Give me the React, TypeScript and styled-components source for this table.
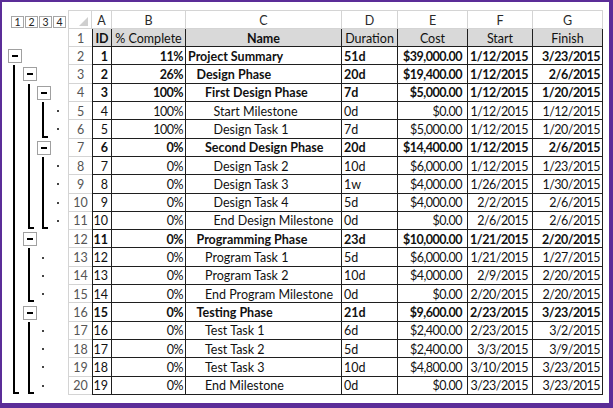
import React from 'react';
import styled, { createGlobalStyle } from 'styled-components';

const GlobalStyle = createGlobalStyle`
  html, body { margin: 0; padding: 0; background: #fff; }
  body { font-family: Lato, "Liberation Sans", sans-serif; }
  * { box-sizing: border-box; }
`;

const COLS = '66px 24px 20px 74px 156px 56px 70px 65px 70px';
const GRID = '#d4d4d4';
const INK = '#1f1f1f';

const Frame = styled.div`
  width: 613px;
  height: 408px;
  border-style: solid;
  border-color: #5b2d98;
  border-width: 2px 4px 5px 2px;
  padding-top: 8px;
  background: #fff;
  overflow: hidden;
`;

const Sheet = styled.div`
  display: flex;
  flex-direction: column;
`;

const Row = styled.div<{ $h: number }>`
  display: grid;
  grid-template-columns: ${COLS};
  height: ${(p) => p.$h}px;
`;

const LevelBar = styled.div`
  display: flex;
  align-items: flex-end;
  padding: 0 0 1px 9px;
  gap: 1px;
`;

const LevelButton = styled.div`
  width: 13px;
  height: 12px;
  border: 1px solid #a6a6a6;
  font-size: 10.5px;
  line-height: 10px;
  color: #222;
  display: flex;
  align-items: center;
  justify-content: center;
  background: #fff;
`;

const Corner = styled.div`
  border: 1px solid ${GRID};
  position: relative;
  &::after {
    content: '';
    position: absolute;
    right: 3px;
    bottom: 2px;
    border-style: solid;
    border-width: 0 0 9px 9px;
    border-color: transparent transparent #cfcfcf transparent;
  }
`;

const ColLetter = styled.div`
  border-top: 1px solid ${GRID};
  border-bottom: 1px solid ${GRID};
  border-right: 1px solid ${GRID};
  display: flex;
  align-items: center;
  justify-content: center;
  font-size: 12.5px;
  color: #2a2a2a;
  padding-top: 1px;
`;

const Gutter = styled.div`
  display: flex;
  padding-left: 6px;
`;

const Slot = styled.div`
  width: 14.6px;
  height: 100%;
  display: flex;
  flex-shrink: 0;
`;

const MinusBox = styled.div`
  width: 14px;
  height: 14px;
  align-self: center;
  border: 1px solid #a0a0a0;
  background: #fff;
  display: flex;
  align-items: center;
  justify-content: center;
  &::after {
    content: '';
    width: 6px;
    height: 2px;
    background: #000;
  }
`;

const VLine = styled.div`
  margin-left: 5px;
  width: 2px;
  height: 100%;
  background: #000;
`;

const LineEnd = styled.div`
  margin-left: 5px;
  width: 6px;
  height: calc(100% - 1px);
  border-left: 2px solid #000;
  border-bottom: 2px solid #000;
`;

const Dot = styled.div`
  margin-left: 5px;
  width: 2px;
  height: 2px;
  align-self: center;
  background: #444;
`;

const RowNum = styled.div`
  border-left: 1px solid ${GRID};
  border-bottom: 1px solid ${GRID};
  display: flex;
  align-items: center;
  justify-content: center;
  font-size: 12.5px;
  color: #555;
  padding-top: 1px;
`;

type Align = 'left' | 'right' | 'center';

const Cell = styled.div<{
  $align: Align;
  $bold?: boolean;
  $indent?: number;
  $head?: boolean;
  $first?: boolean;
  $num?: boolean;
  $padR?: number;
}>`
  border-right: 1px solid ${INK};
  border-bottom: 1px solid ${INK};
  border-left: ${(p) => (p.$first ? `1px solid ${INK}` : 'none')};
  background: ${(p) => (p.$head ? '#d9d9d9' : '#fff')};
  display: flex;
  align-items: center;
  justify-content: ${(p) => (p.$align === 'left' ? 'flex-start' : p.$align === 'right' ? 'flex-end' : 'center')};
  padding: 1px ${(p) => p.$padR ?? 2}px 0 ${(p) => 2 + (p.$indent ?? 0) * 8.5}px;
  font-size: 12.5px;
  letter-spacing: ${(p) => (p.$num ? '-0.5px' : '0')};
  font-weight: ${(p) => (p.$bold ? 700 : 400)};
  color: #111;
  white-space: nowrap;
  overflow: hidden;
`;

type Task = {
  id: number;
  pct: string;
  name: string;
  lvl: number;
  dur: string;
  cost: string;
  start: string;
  finish: string;
  bold?: boolean;
  gutter: string;
};

const tasks: Task[] = [
  { id: 1, pct: '11%', name: 'Project Summary', lvl: 0, dur: '51d', cost: '$39,000.00', start: '1/12/2015', finish: '3/23/2015', bold: true, gutter: 'B' },
  { id: 2, pct: '26%', name: 'Design Phase', lvl: 1, dur: '20d', cost: '$19,400.00', start: '1/12/2015', finish: '2/6/2015', bold: true, gutter: 'LB' },
  { id: 3, pct: '100%', name: 'First Design Phase', lvl: 2, dur: '7d', cost: '$5,000.00', start: '1/12/2015', finish: '1/20/2015', bold: true, gutter: 'LLB' },
  { id: 4, pct: '100%', name: 'Start Milestone', lvl: 3, dur: '0d', cost: '$0.00', start: '1/12/2015', finish: '1/12/2015', gutter: 'LLLD' },
  { id: 5, pct: '100%', name: 'Design Task 1', lvl: 3, dur: '7d', cost: '$5,000.00', start: '1/12/2015', finish: '1/20/2015', gutter: 'LLED' },
  { id: 6, pct: '0%', name: 'Second Design Phase', lvl: 2, dur: '20d', cost: '$14,400.00', start: '1/12/2015', finish: '2/6/2015', bold: true, gutter: 'LLB' },
  { id: 7, pct: '0%', name: 'Design Task 2', lvl: 3, dur: '10d', cost: '$6,000.00', start: '1/12/2015', finish: '1/23/2015', gutter: 'LLLD' },
  { id: 8, pct: '0%', name: 'Design Task 3', lvl: 3, dur: '1w', cost: '$4,000.00', start: '1/26/2015', finish: '1/30/2015', gutter: 'LLLD' },
  { id: 9, pct: '0%', name: 'Design Task 4', lvl: 3, dur: '5d', cost: '$4,000.00', start: '2/2/2015', finish: '2/6/2015', gutter: 'LLLD' },
  { id: 10, pct: '0%', name: 'End Design Milestone', lvl: 3, dur: '0d', cost: '$0.00', start: '2/6/2015', finish: '2/6/2015', gutter: 'LEED' },
  { id: 11, pct: '0%', name: 'Programming Phase', lvl: 1, dur: '23d', cost: '$10,000.00', start: '1/21/2015', finish: '2/20/2015', bold: true, gutter: 'LB' },
  { id: 12, pct: '0%', name: 'Program Task 1', lvl: 2, dur: '5d', cost: '$6,000.00', start: '1/21/2015', finish: '1/27/2015', gutter: 'LLD' },
  { id: 13, pct: '0%', name: 'Program Task 2', lvl: 2, dur: '10d', cost: '$4,000.00', start: '2/9/2015', finish: '2/20/2015', gutter: 'LLD' },
  { id: 14, pct: '0%', name: 'End Program Milestone', lvl: 2, dur: '0d', cost: '$0.00', start: '2/20/2015', finish: '2/20/2015', gutter: 'LED' },
  { id: 15, pct: '0%', name: 'Testing Phase', lvl: 1, dur: '21d', cost: '$9,600.00', start: '2/23/2015', finish: '3/23/2015', bold: true, gutter: 'LB' },
  { id: 16, pct: '0%', name: 'Test Task 1', lvl: 2, dur: '6d', cost: '$2,400.00', start: '2/23/2015', finish: '3/2/2015', gutter: 'LLD' },
  { id: 17, pct: '0%', name: 'Test Task 2', lvl: 2, dur: '5d', cost: '$2,400.00', start: '3/3/2015', finish: '3/9/2015', gutter: 'LLD' },
  { id: 18, pct: '0%', name: 'Test Task 3', lvl: 2, dur: '10d', cost: '$4,800.00', start: '3/10/2015', finish: '3/23/2015', gutter: 'LLD' },
  { id: 19, pct: '0%', name: 'End Milestone', lvl: 2, dur: '0d', cost: '$0.00', start: '3/23/2015', finish: '3/23/2015', gutter: 'EED' },
];

const SlotContent: React.FC<{ k: string }> = ({ k }) => {
  if (k === 'B') return <MinusBox />;
  if (k === 'L') return <VLine />;
  if (k === 'E') return <LineEnd />;
  if (k === 'D') return <Dot />;
  return null;
};

const OutlineGutter: React.FC<{ code: string }> = ({ code }) => (
  <Gutter>
    {code.split('').map((k, i) => (
      <Slot key={i}>
        <SlotContent k={k} />
      </Slot>
    ))}
  </Gutter>
);

const ROW_H = 18.32;

export default function App() {
  return (
    <>
      <GlobalStyle />
      <Frame>
        <Sheet>
          <Row $h={19}>
            <LevelBar>
              {[1, 2, 3, 4].map((n) => (
                <LevelButton key={n}>{n}</LevelButton>
              ))}
            </LevelBar>
            <Corner />
            {['A', 'B', 'C', 'D', 'E', 'F', 'G'].map((c) => (
              <ColLetter key={c}>{c}</ColLetter>
            ))}
          </Row>
          <Row $h={18}>
            <Gutter />
            <RowNum>1</RowNum>
            <Cell $align="center" $head $first $bold>ID</Cell>
            <Cell $align="center" $head>% Complete</Cell>
            <Cell $align="center" $head $bold>Name</Cell>
            <Cell $align="center" $head>Duration</Cell>
            <Cell $align="center" $head>Cost</Cell>
            <Cell $align="center" $head>Start</Cell>
            <Cell $align="center" $head>Finish</Cell>
          </Row>
          {tasks.map((t, i) => (
            <Row $h={ROW_H} key={t.id}>
              <OutlineGutter code={t.gutter} />
              <RowNum>{i + 2}</RowNum>
              <Cell $align="right" $first $bold={t.bold} $padR={3}>{t.id}</Cell>
              <Cell $align="right" $bold={t.bold} $num>{t.pct}</Cell>
              <Cell $align="left" $bold={t.bold} $indent={t.lvl}>{t.name}</Cell>
              <Cell $align="left" $bold={t.bold}>{t.dur}</Cell>
              <Cell $align="right" $bold={t.bold} $num $padR={5}>{t.cost}</Cell>
              <Cell $align="right" $bold={t.bold} $num $padR={4}>{t.start}</Cell>
              <Cell $align="right" $bold={t.bold} $num $padR={2}>{t.finish}</Cell>
            </Row>
          ))}
        </Sheet>
      </Frame>
    </>
  );
}
